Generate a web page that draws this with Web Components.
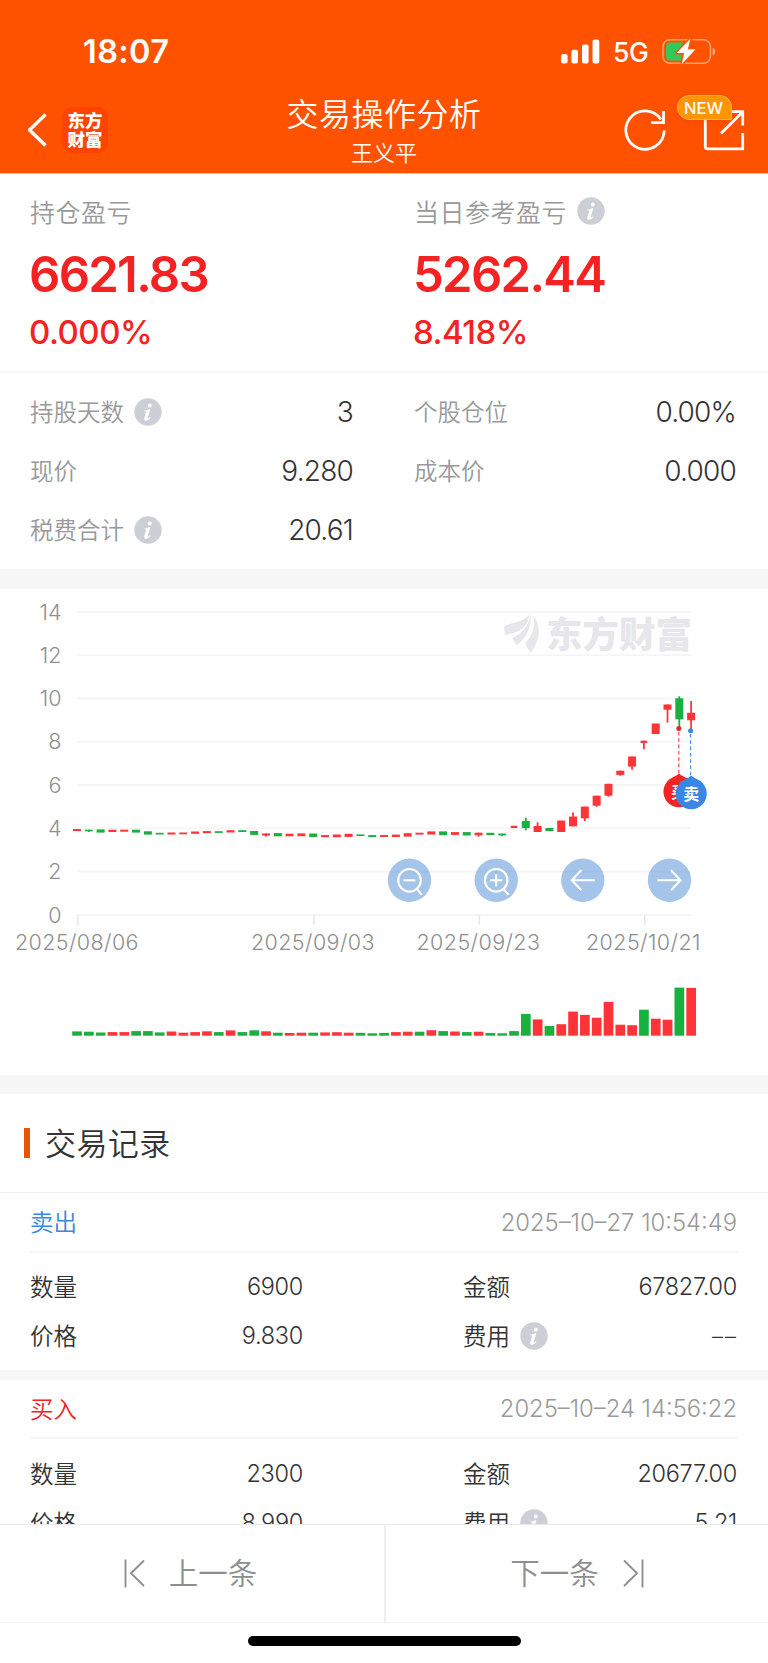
<!DOCTYPE html>
<html lang="zh-CN">
<head>
<meta charset="utf-8">
<title>交易操作分析</title>
<style>
body {
    margin: 0;
    background: #fff;
    font-family: Inter, "Noto Sans CJK SC", sans-serif;
    color: #333;
}
</style>
</head>
<body>
<trade-app>
    <status-bar slot="top" time="18:07" network="5G"></status-bar>
    <nav-header slot="top" heading="交易操作分析" sub="王义平"></nav-header>

    <profit-panel>
        <profit-item label="持仓盈亏" value="6621.83" rate="0.000%"></profit-item>
        <profit-item label="当日参考盈亏" value="5262.44" rate="8.418%" info></profit-item>
    </profit-panel>
    <stat-grid>
        <stat-row label="持股天数" info>3</stat-row>
        <stat-row label="个股仓位">0.00%</stat-row>
        <stat-row label="现价">9.280</stat-row>
        <stat-row label="成本价">0.000</stat-row>
        <stat-row label="税费合计" info>20.61</stat-row>
    </stat-grid>
    <k-chart></k-chart>
    <section-title>交易记录</section-title>
    <trade-record kind="sell" time="2025–10–27 10:54:49" amount="6900" price="9.830" total="67827.00" fee="––"></trade-record>
    <trade-record kind="buy" time="2025–10–24 14:56:22" amount="2300" price="8.990" total="20677.00" fee="5.21"></trade-record>

    <pager-bar slot="bottom"></pager-bar>
</trade-app>

<script>
class BaseElement extends HTMLElement {
    constructor() {
        super();
        this.shadow = this.attachShadow({mode: "open"});
    }

    connectedCallback() {
        this.shadow.innerHTML = this.render();
    }

    attr(name) {
        return this.getAttribute(name) || "";
    }
}

class TradeApp extends BaseElement {
    render() {
        return `
        <style>
        :host { display: flex; flex-direction: column; width: 768px; height: 1663px; overflow: hidden; }
        .top { flex: none; height: 174px; box-sizing: border-box; background: #ff5200; border-bottom: 1px solid #ffc2a6; }
        .body { flex: 1; min-height: 0; overflow: hidden; }
        </style>
        <div class="top"><slot name="top"></slot></div>
        <div class="body"><slot></slot></div>
        <slot name="bottom"></slot>
        `
    }
}

class StatusBar extends BaseElement {
    render() {
        return `
        <style>
        :host { display: flex; align-items: center; justify-content: space-between; height: 103px; padding: 0 52px 0 83px; box-sizing: border-box; color: #fff; }
        .time { font-size: 32.5px; font-weight: 580; letter-spacing: 0.4px; }
        .right { display: flex; align-items: center; }
        .net { font-size: 26.5px; font-weight: 450; margin: 0 13.5px 0 13px; letter-spacing: -0.4px; }
        svg { display: block; }
        </style>
        <div class="time">${this.attr("time")}</div>
        <div class="right">
            <svg width="39" height="25" viewBox="0 0 39 25" fill="#fff">
                <rect x="0" y="15" width="6.6" height="9.4" rx="2"/>
                <rect x="10.4" y="10.7" width="6.6" height="13.7" rx="2"/>
                <rect x="21" y="5.4" width="6.6" height="19" rx="2"/>
                <rect x="31.5" y="0.4" width="6.8" height="24" rx="2"/>
            </svg>
            <span class="net">${this.attr("network")}</span>
            <svg width="54" height="28" viewBox="0 0 54 28">
                <rect x="0.9" y="1.7" width="47.6" height="23.6" rx="7" fill="none" stroke="#fff" stroke-opacity=".45" stroke-width="1.5"/>
                <path d="M50.6 9.8c2 .8 2.6 2.2 2.6 3.9s-.6 3.1-2.6 3.9z" fill="#fff" fill-opacity=".5"/>
                <path d="M8 4.5h13v18H8a4 4 0 0 1-4-4v-10a4 4 0 0 1 4-4z" fill="#34c759"/>
                <path d="M28.5 0.5 L14.6 15.1 H22.2 L19.6 26.5 L33.5 11.3 H25.8 Z" fill="#fff" stroke="#ff5200" stroke-width="3" stroke-linejoin="round" paint-order="stroke"/>
            </svg>
        </div>
        `
    }
}

class NavHeader extends BaseElement {
    render() {
        return `
        <style>
        :host { display: grid; grid-template-columns: 1fr 220px 1fr; height: 70px; margin-top: -9px; color: #fff; }
        .left { display: flex; align-items: center; gap: 15px; height: 70px; padding: 2px 0 0 27px; box-sizing: border-box; }
        .logo { width: 46px; height: 46px; border-radius: 11px; background: #ff4400; font-size: 17.5px; line-height: 19px; font-weight: 800; text-align: center; padding-top: 4px; box-sizing: border-box; }
        .mid { text-align: center; white-space: nowrap; padding-top: 1px; }
        h1 { font-size: 32px; line-height: 40px; font-weight: 350; margin: 0; letter-spacing: 0.5px; }
        .sub { font-size: 22px; line-height: 36px; font-weight: 350; }
        .right { position: relative; }
        svg { display: block; overflow: visible; }
        .right svg { margin: 13px 0 0 130px; }
        .new { position: absolute; left: 183px; top: 1px; width: 55px; height: 25px; box-sizing: border-box; border: 1px solid #ffb04c; border-radius: 13px 13px 1px 13px; background: #ff9500; font-size: 16.5px; line-height: 24px; font-weight: 500; text-align: center; box-shadow: 0 1px 4px rgba(200, 50, 0, .25); padding-right: 2px; }
        </style>
        <div class="left">
            <svg width="20" height="34" viewBox="0 0 20 34" fill="none" stroke="#fff" stroke-width="3.4" stroke-linejoin="round">
                <path d="M18.5 1.5 L2.5 17 L18.5 32.5"/>
            </svg>
            <div class="logo">东方<br>财富</div>
        </div>
        <div class="mid">
            <h1>${this.attr("heading")}</h1>
            <div class="sub">${this.attr("sub")}</div>
        </div>
        <div class="right">
            <svg width="120" height="45" viewBox="624 107 120 45" fill="none" stroke="#fff" stroke-width="2.8">
                <path d="M664.2 130.5 A19.2 19.2 0 1 1 661 119.5"/>
                <path d="M663.5 111 V122.7 H651"/>
                <path d="M705.3 118 V146.5 Q705.3 148.8 707.6 148.8 H742.7 V133"/>
                <path d="M721 133.5 L742 112.5 M730 111.7 H742.7 V125.5"/>
            </svg>
            <span class="new">NEW</span>
        </div>
        `
    }
}

class InfoIcon extends BaseElement {
    render() {
        return `
        <style>
        :host { display: inline-block; width: 28px; height: 28px; }
        svg { display: block; }
        </style>
        <svg width="28" height="28" viewBox="0 0 28 28">
            <circle cx="14" cy="14" r="13.7" fill="#cccfd5"/>
            <circle cx="15.7" cy="7.6" r="2" fill="#fff"/>
            <path d="M10.4 12.6 C12.5 12.5 14.2 11.9 16.4 11 L13.7 19.8 C13.4 21.2 14.3 20.8 16 19.2 L16.5 19.8 C14.7 22.2 13 23 11.5 22.8 C10 22.5 10 21.2 10.4 19.7 L12.2 14 C12.3 13.4 11.6 13.4 10.4 13.4 Z" fill="#fff"/>
        </svg>
        `
    }
}

class ProfitPanel extends BaseElement {
    render() {
        return `
        <style>
        :host { display: grid; grid-template-columns: 384px 384px; height: 199px; margin-bottom: -1px; box-sizing: border-box; border-bottom: 2px solid #f6f6f6; }
        </style>
        <slot></slot>
        `
    }
}

class ProfitItem extends BaseElement {
    render() {
        return `
        <style>
        :host { display: block; padding: 19px 0 0 30px; color: #f42222; }
        .label { display: flex; align-items: center; gap: 10px; height: 36px; font-size: 25px; font-weight: 350; letter-spacing: 0.5px; color: #999; }
        .value { font-size: 49px; line-height: 60px; font-weight: 560; margin: 16px 0 7px -1px; letter-spacing: -1.7px; }
        .rate { font-size: 33px; line-height: 40px; font-weight: 500; margin-left: -1px; letter-spacing: -0.5px; }
        </style>
        <div class="label">${this.attr("label")}${this.hasAttribute("info") ? "<info-icon></info-icon>" : ""}</div>
        <div class="value">${this.attr("value")}</div>
        <div class="rate">${this.attr("rate")}</div>
        `
    }
}

class StatGrid extends BaseElement {
    render() {
        return `
        <style>
        :host { display: grid; grid-template-columns: 323px 322px; grid-auto-rows: 59px; column-gap: 61px; height: 217px; padding: 10px 30px 0; box-sizing: border-box; border-bottom: 20px solid #f7f7f7; }
        </style>
        <slot></slot>
        `
    }
}

class StatRow extends BaseElement {
    render() {
        return `
        <style>
        :host { display: flex; align-items: center; font-size: 28px; }
        .label { font-size: 23.5px; font-weight: 350; color: #999; margin: 0 10px 1px 0; }
        .value { margin-left: auto; font-weight: 350; letter-spacing: -0.8px; }
        </style>
        <span class="label">${this.attr("label")}</span>
        ${this.hasAttribute("info") ? "<info-icon></info-icon>" : ""}
        <span class="value"><slot></slot></span>
        `
    }
}

const RED = "#ff3438";
const GREEN = "#18b03f";
const LEFT = 77;
const STEP = 11.81;

// [colour, body top, body bottom, wick top, wick bottom]
const CANDLES = [
    ["r", 829, 831], ["g", 829.7, 831.3, 829.7, 832], ["g", 829.4, 832.6], ["r", 829.7, 832], ["r", 829.7, 831.7],
    ["g", 829.7, 832.6], ["g", 831.3, 834.6], ["g", 832.8, 834.5], ["r", 832.5, 834.5], ["r", 832.5, 834.3],
    ["r", 831.5, 833.8], ["r", 831.1, 833.2], ["g", 831.2, 832.9], ["r", 830.2, 832.5], ["g", 830.2, 832],
    ["g", 831, 834.9], ["r", 833.5, 835.5, 833.5, 836.6], ["g", 833.1, 836.3], ["r", 833.7, 836.3], ["r", 833.4, 836.2],
    ["g", 833.5, 837], ["r", 835.1, 837.2], ["r", 834.5, 837.2], ["r", 833.8, 836.9], ["g", 834.4, 836],
    ["g", 835.1, 837], ["r", 835, 836.9], ["r", 834.6, 837], ["r", 833.2, 836.6], ["r", 832.7, 834.6],
    ["r", 831.4, 834.5], ["g", 831.4, 835.2], ["r", 832.1, 834.9], ["g", 832.1, 835.5], ["r", 832.7, 835.3, 832.7, 836.7],
    ["g", 832.8, 835], ["g", 833.6, 835.4, 833.6, 836.2], ["r", 825.8, 828], ["g", 821, 828, 817.7, 830.3], ["r", 826, 832, 822.3, 832],
    ["g", 828, 831], ["r", 820.5, 832], ["r", 816.6, 826.3, 812.4, 826.3], ["r", 806.6, 818.3, 806.6, 821], ["r", 795.7, 805.7, 795.7, 806.8],
    ["r", 783.8, 795.7, 783.8, 796.7], ["r", 770.7, 774.9, 770.7, 775.7], ["r", 756.5, 766.6, 756.5, 769.7], ["r", 740.7, 743, 740.7, 749.2], ["r", 723.5, 734],
    ["r", 704.5, 709.7, 704.5, 722.6], ["g", 698.3, 719.3, 696.3, 728], ["r", 712.8, 720.3, 701, 730]
];

// [colour, bar height]
const VOLUMES = [
    ["g", 4.3], ["g", 4], ["g", 3.2], ["r", 3.6], ["r", 3.6], ["g", 4.6], ["g", 4.6], ["g", 3.3], ["r", 4.2], ["r", 3],
    ["r", 3.6], ["r", 4.4], ["g", 3.6], ["r", 5.3], ["g", 3.6], ["g", 5.4], ["r", 4.4], ["g", 3], ["r", 2.7], ["r", 3],
    ["g", 3], ["r", 3.3], ["r", 3.5], ["r", 3], ["g", 2.9], ["g", 2.4], ["g", 2.8], ["r", 3.6], ["r", 4], ["g", 4],
    ["r", 5.5], ["g", 4.6], ["r", 4.2], ["g", 3.6], ["r", 4], ["g", 2.7], ["g", 2.4], ["g", 4.6], ["g", 21.7], ["r", 16.3],
    ["g", 9.7], ["r", 11.5], ["r", 24.1], ["r", 20.8], ["r", 18], ["r", 33.8], ["r", 11], ["r", 10.5], ["g", 26], ["r", 17],
    ["r", 16], ["g", 48.1], ["r", 47.8]
];

class KChart extends BaseElement {
    grid() {
        let out = "";
        for (let i = 0; i <= 7; i++) {
            const y = 914.9 - i * 43.28;
            out += `<rect x="77" y="${y - 0.9}" width="614" height="1.8" fill="#f5f5f6"/>`;
            out += `<text class="axis" x="61.5" y="${y + 7.6}" text-anchor="end">${i * 2}</text>`;
        }
        return out;
    }

    dates() {
        return [
            [0, "2025/08/06", 77, 122], [20, "2025/09/03", 313, 122], [34, "2025/09/23", 478.5, 122], [48, "2025/10/21", 643.5, 113]
        ].map(([i, text, x, width]) => `
            <rect x="${LEFT + i * STEP}" y="915" width="1.6" height="10" fill="#e8e8ea"/>
            <text class="axis" x="${x - width / 2 - 1}" y="950" textLength="${width + 1.5}">${text}</text>`).join("");
    }

    candles() {
        return CANDLES.map(([c, top, bottom, high, low], i) => {
            const x = LEFT + i * STEP;
            const color = c === "r" ? RED : GREEN;
            const half = i === 37 || i === 48 ? 3.3 : 4;
            const wick = high ? `<rect x="${x - 0.9}" y="${high}" width="1.8" height="${low - high}" fill="${color}"/>` : "";
            return `${wick}<rect x="${x - half}" y="${top}" width="${half * 2}" height="${bottom - top}" fill="${color}"/>`;
        }).join("");
    }

    volumes() {
        return VOLUMES.map(([c, h], i) =>
            `<rect x="${LEFT + i * STEP - 4.8}" y="${1035.7 - h}" width="9.7" height="${h}" fill="${c === "r" ? RED : GREEN}"/>`
        ).join("");
    }

    button(x, icon) {
        return `
        <g transform="translate(${x} 880.3)">
            <circle r="21.7" fill="#3a7fd0" fill-opacity=".46"/>
            <g fill="none" stroke="#fff" stroke-width="2.1">${icon}</g>
        </g>`;
    }

    pin(x, y, color, text) {
        return `
        <g transform="translate(${x} ${y})">
            <path d="M0 -18.3 C3 -15.5 6 -15 9.5 -12.5 A15.6 15.6 0 1 1 -9.5 -12.5 C-6 -15 -3 -15.5 0 -18.3 Z" fill="${color}"/>
            <text class="pin" y="6" text-anchor="middle">${text}</text>
        </g>`;
    }

    render() {
        const lens = `<circle cx="0" cy="0" r="11.3"/><path d="M7.5 9 L12.3 14.5"/><path d="M-6 0 H6"/>`;
        return `
        <style>
        :host { display: block; height: 505px; box-sizing: border-box; border-bottom: 19px solid #f7f7f7; }
        svg { display: block; }
        .axis { font-size: 21.5px; font-weight: 300; fill: #8e8e8e; }
        .mark { font-size: 36.5px; font-weight: 900; fill: #e6e6eb; }
        .pin { font-size: 16px; font-weight: 600; fill: #fff; }
        </style>
        <svg width="768" height="486" viewBox="0 589 768 486">
            ${this.grid()}
            ${this.dates()}
            <g fill="#e6e6eb">
                <path d="M504 627 C509 622 521 624 529 615 C529 626 519 633 505 635 Z"/>
                <path d="M530.5 614 C532.5 625 526 639 516.5 645.5 L512.5 638 C521 634 529.5 626 530.5 614 Z"/>
                <path d="M533 615.5 C541 624 541 640 530.5 653 L525 643.5 C533 636 536 625 533 615.5 Z"/>
            </g>
            <text class="mark" x="546" y="647.5" textLength="146">东方财富</text>
            ${this.candles()}
            ${this.volumes()}
            <path d="M678.8 732 V774" stroke="${RED}" stroke-width="1.1" stroke-dasharray="3.5 2.8"/>
            <path d="M690.6 734 V776" stroke="#3a86e4" stroke-width="1.1" stroke-dasharray="3.5 2.8"/>
            <circle cx="678.8" cy="728.5" r="2.5" fill="#e2272c"/>
            <circle cx="690.6" cy="730.7" r="2.5" fill="#3a86e4"/>
            ${this.pin(679, 791.8, "#f52424", "买")}
            ${this.pin(691.2, 793.8, "#3a86e4", "卖")}
            ${this.button(409.5, lens)}
            ${this.button(496.2, lens + `<path d="M0 -6 V6"/>`)}
            ${this.button(582.8, `<path d="M12 0 H-11 M-1.5 -10 L-11 0 L-1.5 10"/>`)}
            ${this.button(669.5, `<path d="M-12 0 H11 M1.5 -10 L11 0 L1.5 10"/>`)}
        </svg>
        `
    }
}

class SectionTitle extends BaseElement {
    render() {
        return `
        <style>
        :host { display: flex; align-items: center; gap: 15px; height: 98px; padding-left: 24px; font-size: 31px; font-weight: 350; letter-spacing: 0.4px; }
        i { width: 6px; height: 30px; background: #ea5404; }
        span { margin-bottom: 4px; }
        </style>
        <i></i><span><slot></slot></span>
        `
    }
}

class TradeRecord extends BaseElement {
    render() {
        const sell = this.attr("kind") === "sell";
        return `
        <style>
        :host { display: block; height: 188px; box-sizing: border-box; border-top: ${sell ? "1px solid #f0f0f0" : "0"}; border-bottom: 10px solid #f7f7f7; font-size: 23.5px; font-weight: 350; padding: 0 30px; }
        .head { display: flex; justify-content: space-between; align-items: center; height: ${sell ? 58 : 57}px; border-bottom: 2px solid #f6f6f6; }
        .kind { color: ${sell ? "#3a86e4" : "#f42222"}; margin-bottom: 2px; }
        .time { color: #999; font-weight: 300; font-size: 23.8px; margin-right: 1px; }
        .rows { display: grid; grid-template-columns: 273px 274px; column-gap: 160px; grid-auto-rows: 49px; padding-top: ${sell ? 9 : 10}px; }
        .row { display: flex; align-items: center; }
        .row span { margin-bottom: 2px; }
        .row b { margin-left: auto; font-weight: 350; letter-spacing: -0.3px; }
        .row .none { letter-spacing: 2px; font-size: 22px; margin-right: -1px; }
        info-icon { margin-left: 10px; }
        </style>
        <div class="head">
            <span class="kind">${sell ? "卖出" : "买入"}</span>
            <span class="time">${this.attr("time")}</span>
        </div>
        <div class="rows">
            <div class="row"><span>数量</span><b>${this.attr("amount")}</b></div>
            <div class="row"><span>金额</span><b>${this.attr("total")}</b></div>
            <div class="row"><span>价格</span><b>${this.attr("price")}</b></div>
            <div class="row"><span>费用</span><info-icon></info-icon><b class="${sell ? "none" : ""}">${this.attr("fee")}</b></div>
        </div>
        `
    }
}

class PagerBar extends BaseElement {
    render() {
        return `
        <style>
        :host { display: block; flex: none; height: 139px; background: #fff; }
        .buttons { display: grid; grid-template-columns: 1fr 1fr; height: 97px; border-top: 1px solid #e8e8e8; border-bottom: 1px solid #f2f2f2; }
        .btn { display: flex; align-items: center; justify-content: center; gap: 24px; font-size: 29.5px; font-weight: 350; color: #8f8f8f; }
        .btn span { margin-bottom: 6px; }
        .next { border-left: 2px solid #efefef; }
        .prev { padding-right: 3px; }
        .home { width: 273px; height: 10px; border-radius: 5px; background: #000; margin: 13px 0 0 247.5px; }
        </style>
        <div class="buttons">
            <div class="btn prev">
                <svg width="21" height="29" viewBox="0 0 21 29" fill="none" stroke="#8f8f8f" stroke-width="1.9"><path d="M1.5 0.5 V28.5 M20 1.5 L7 14.3 L20 27"/></svg>
                <span>上一条</span>
            </div>
            <div class="btn next">
                <span>下一条</span>
                <svg width="21" height="29" viewBox="0 0 21 29" fill="none" stroke="#8f8f8f" stroke-width="1.9"><path d="M19.5 0.5 V28.5 M1 1.5 L14 14.3 L1 27"/></svg>
            </div>
        </div>
        <div class="home"></div>
        `
    }
}

customElements.define("info-icon", InfoIcon);
customElements.define("trade-app", TradeApp);
customElements.define("status-bar", StatusBar);
customElements.define("nav-header", NavHeader);
customElements.define("profit-panel", ProfitPanel);
customElements.define("profit-item", ProfitItem);
customElements.define("stat-grid", StatGrid);
customElements.define("stat-row", StatRow);
customElements.define("k-chart", KChart);
customElements.define("section-title", SectionTitle);
customElements.define("trade-record", TradeRecord);
customElements.define("pager-bar", PagerBar);
</script>
</body>
</html>
